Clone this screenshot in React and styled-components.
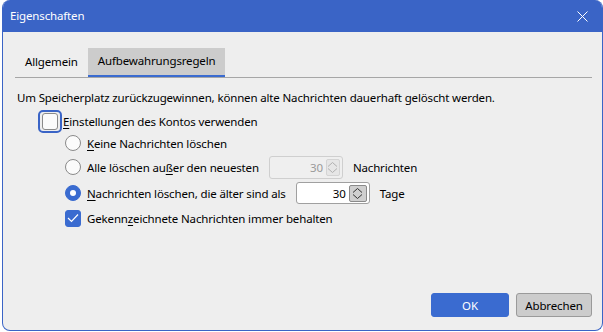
import React from "react";
import styled, { createGlobalStyle } from "styled-components";

const Global = createGlobalStyle`
  html, body {
    margin: 0;
    padding: 0;
    background: #ffffff;
    overflow: hidden;
  }
  body {
    font-family: "Noto Sans", "Open Sans", sans-serif;
    font-size: 11.5px;
    letter-spacing: -0.15px;
    color: #000;
  }
`;

const Page = styled.div`
  display: flex;
  padding-left: 2px;
`;

const Window = styled.div`
  width: 601px;
  height: 331px;
  box-sizing: border-box;
  border: 1px solid #3a64c6;
  border-top: none;
  border-radius: 8px;
  background: #eeeeee;
  display: flex;
  flex-direction: column;
  overflow: hidden;
`;

const TitleBar = styled.div`
  height: 32px;
  flex: none;
  background: #3a64c6;
  color: #fff;
  display: flex;
  align-items: center;
  justify-content: space-between;
  padding: 0 14px 0 7px;
`;

const Title = styled.span`
  padding-bottom: 2px;
`;

const Body = styled.div`
  flex: 1;
  display: flex;
  flex-direction: column;
  padding: 16px 10px 13px 12px;
`;

const TabBar = styled.div`
  display: flex;
  border-bottom: 1px solid #a6a6a6;
  height: 29px;
`;

const Tab = styled.div`
  display: flex;
  align-items: center;
  padding: 0 10px;
  box-sizing: border-box;
  height: 29px;
  background: ${(p) => (p.$active ? "#cccccc" : "transparent")};
  border-bottom: 2px solid ${(p) => (p.$active ? "#3a6bd0" : "transparent")};
  padding-bottom: ${(p) => (p.$active ? "2px" : "0")};
`;

const Panel = styled.div`
  flex: 1;
  display: flex;
  flex-direction: column;
  padding: 12px 0 0 2px;
`;

const Intro = styled.div`
  height: 16px;
  line-height: 16px;
  margin-bottom: 3px;
`;

const Row = styled.div`
  display: flex;
  align-items: center;
  height: ${(p) => p.$h}px;
  margin-top: ${(p) => p.$mt || 0}px;
  padding-left: ${(p) => p.$indent || 0}px;
  gap: 6px;
`;

const Label = styled.span`
  white-space: nowrap;
`;

const Key = styled.span`
  text-decoration: underline;
  text-underline-offset: 2px;
`;

const FocusRing = styled.span`
  display: flex;
  align-items: center;
  justify-content: center;
  width: 24px;
  height: 23px;
  box-sizing: border-box;
  border: 2px solid #3a64c6;
  border-radius: 5px;
  margin-left: 21px;
  margin-right: -5px;
`;

const Box = styled.span`
  width: 16px;
  height: 17px;
  box-sizing: border-box;
  border-radius: 3px;
  display: flex;
  align-items: center;
  justify-content: center;
  background: ${(p) => (p.$checked ? "#3a6bd0" : "#fbfbfb")};
  border: 1px solid ${(p) => (p.$checked ? "#3a6bd0" : "#8a8a8a")};
`;

const Radio = styled.span`
  width: 16px;
  height: 16px;
  box-sizing: border-box;
  border-radius: 50%;
  background: ${(p) => (p.$checked ? "#3a6bd0" : "#fbfbfb")};
  border: 1px solid ${(p) => (p.$checked ? "#3a6bd0" : "#8a8a8a")};
  display: flex;
  align-items: center;
  justify-content: center;
  &::after {
    content: "";
    display: ${(p) => (p.$checked ? "block" : "none")};
    width: 6px;
    height: 6px;
    border-radius: 50%;
    background: #fff;
  }
`;

const Spin = styled.div`
  display: flex;
  align-items: center;
  justify-content: flex-end;
  box-sizing: border-box;
  width: ${(p) => p.$w}px;
  height: ${(p) => p.$h}px;
  border: 1px solid ${(p) => (p.$disabled ? "#cfcfcf" : "#a0a0a0")};
  border-radius: 3px;
  background: ${(p) => (p.$disabled ? "#efefef" : "#ffffff")};
  color: ${(p) => (p.$disabled ? "#9a9a9a" : "#000")};
  padding-right: 2px;
  gap: 3px;
  margin: 0 4px;
`;

const SpinButton = styled.span`
  display: flex;
  align-items: center;
  justify-content: center;
  box-sizing: border-box;
  width: ${(p) => p.$w}px;
  height: 17px;
  border: 1px solid ${(p) => (p.$disabled ? "#d4d4d4" : "#8a8a8a")};
  border-radius: 2px;
  background: ${(p) => (p.$disabled ? "#e6e6e6" : "#cfcfcf")};
`;

const Footer = styled.div`
  display: flex;
  justify-content: flex-end;
  gap: 7px;
`;

const Button = styled.button`
  width: ${(p) => p.$w}px;
  height: 24px;
  box-sizing: border-box;
  font-family: inherit;
  font-size: inherit;
  letter-spacing: inherit;
  border-radius: 3px;
  border: 1px solid ${(p) => (p.$primary ? "#3a6bd0" : "#9a9a9a")};
  background: ${(p) => (p.$primary ? "#3a6bd0" : "#cccccc")};
  color: ${(p) => (p.$primary ? "#fff" : "#000")};
  padding: 0;
`;

const Chevrons = ({ color }) => (
  <svg width="11" height="13" viewBox="0 0 11 13">
    <path d="M1 5.5 L5.5 1.5 L10 5.5" fill="none" stroke={color} strokeWidth="1" />
    <path d="M1 7.5 L5.5 11.5 L10 7.5" fill="none" stroke={color} strokeWidth="1" />
  </svg>
);

const Check = () => (
  <svg width="12" height="10" viewBox="0 0 12 10">
    <path d="M1 5 L4.5 8.5 L11 1.5" fill="none" stroke="#fff" strokeWidth="1.2" />
  </svg>
);

const CloseIcon = () => (
  <svg width="11" height="11" viewBox="0 0 11 11">
    <path d="M0.5 0.5 L10.5 10.5 M10.5 0.5 L0.5 10.5" stroke="#fff" strokeWidth="1" />
  </svg>
);

export default function App() {
  return (
    <>
      <Global />
      <Page>
        <Window>
          <TitleBar>
            <Title>Eigenschaften</Title>
            <CloseIcon />
          </TitleBar>
          <Body>
            <TabBar>
              <Tab>Allgemein</Tab>
              <Tab $active>Aufbewahrungsregeln</Tab>
            </TabBar>
            <Panel>
              <Intro>
                Um Speicherplatz zurückzugewinnen, können alte Nachrichten dauerhaft gelöscht werden.
              </Intro>
              <Row $h={24}>
                <FocusRing>
                  <Box />
                </FocusRing>
                <Label>
                  <Key>E</Key>instellungen des Kontos verwenden
                </Label>
              </Row>
              <Row $h={20} $indent={48}>
                <Radio />
                <Label>
                  <Key>K</Key>eine Nachrichten löschen
                </Label>
              </Row>
              <Row $h={24} $mt={2} $indent={48}>
                <Radio />
                <Label>
                  Alle löschen au<Key>ß</Key>er den neuesten
                </Label>
                <Spin $w={74} $h={23} $disabled>
                  30
                  <SpinButton $w={14} $disabled>
                    <Chevrons color="#b0b0b0" />
                  </SpinButton>
                </Spin>
                <Label>Nachrichten</Label>
              </Row>
              <Row $h={26} $mt={1} $indent={48}>
                <Radio $checked />
                <Label>
                  <Key>N</Key>achrichten löschen, die älter sind als
                </Label>
                <Spin $w={74} $h={22}>
                  30
                  <SpinButton $w={18}>
                    <Chevrons color="#333" />
                  </SpinButton>
                </Spin>
                <Label>Tage</Label>
              </Row>
              <Row $h={22} $mt={1} $indent={48}>
                <Box $checked>
                  <Check />
                </Box>
                <Label>
                  Gekenn<Key>z</Key>eichnete Nachrichten immer behalten
                </Label>
              </Row>
            </Panel>
            <Footer>
              <Button $primary $w={78}>OK</Button>
              <Button $w={76}>Abbrechen</Button>
            </Footer>
          </Body>
        </Window>
      </Page>
    </>
  );
}
